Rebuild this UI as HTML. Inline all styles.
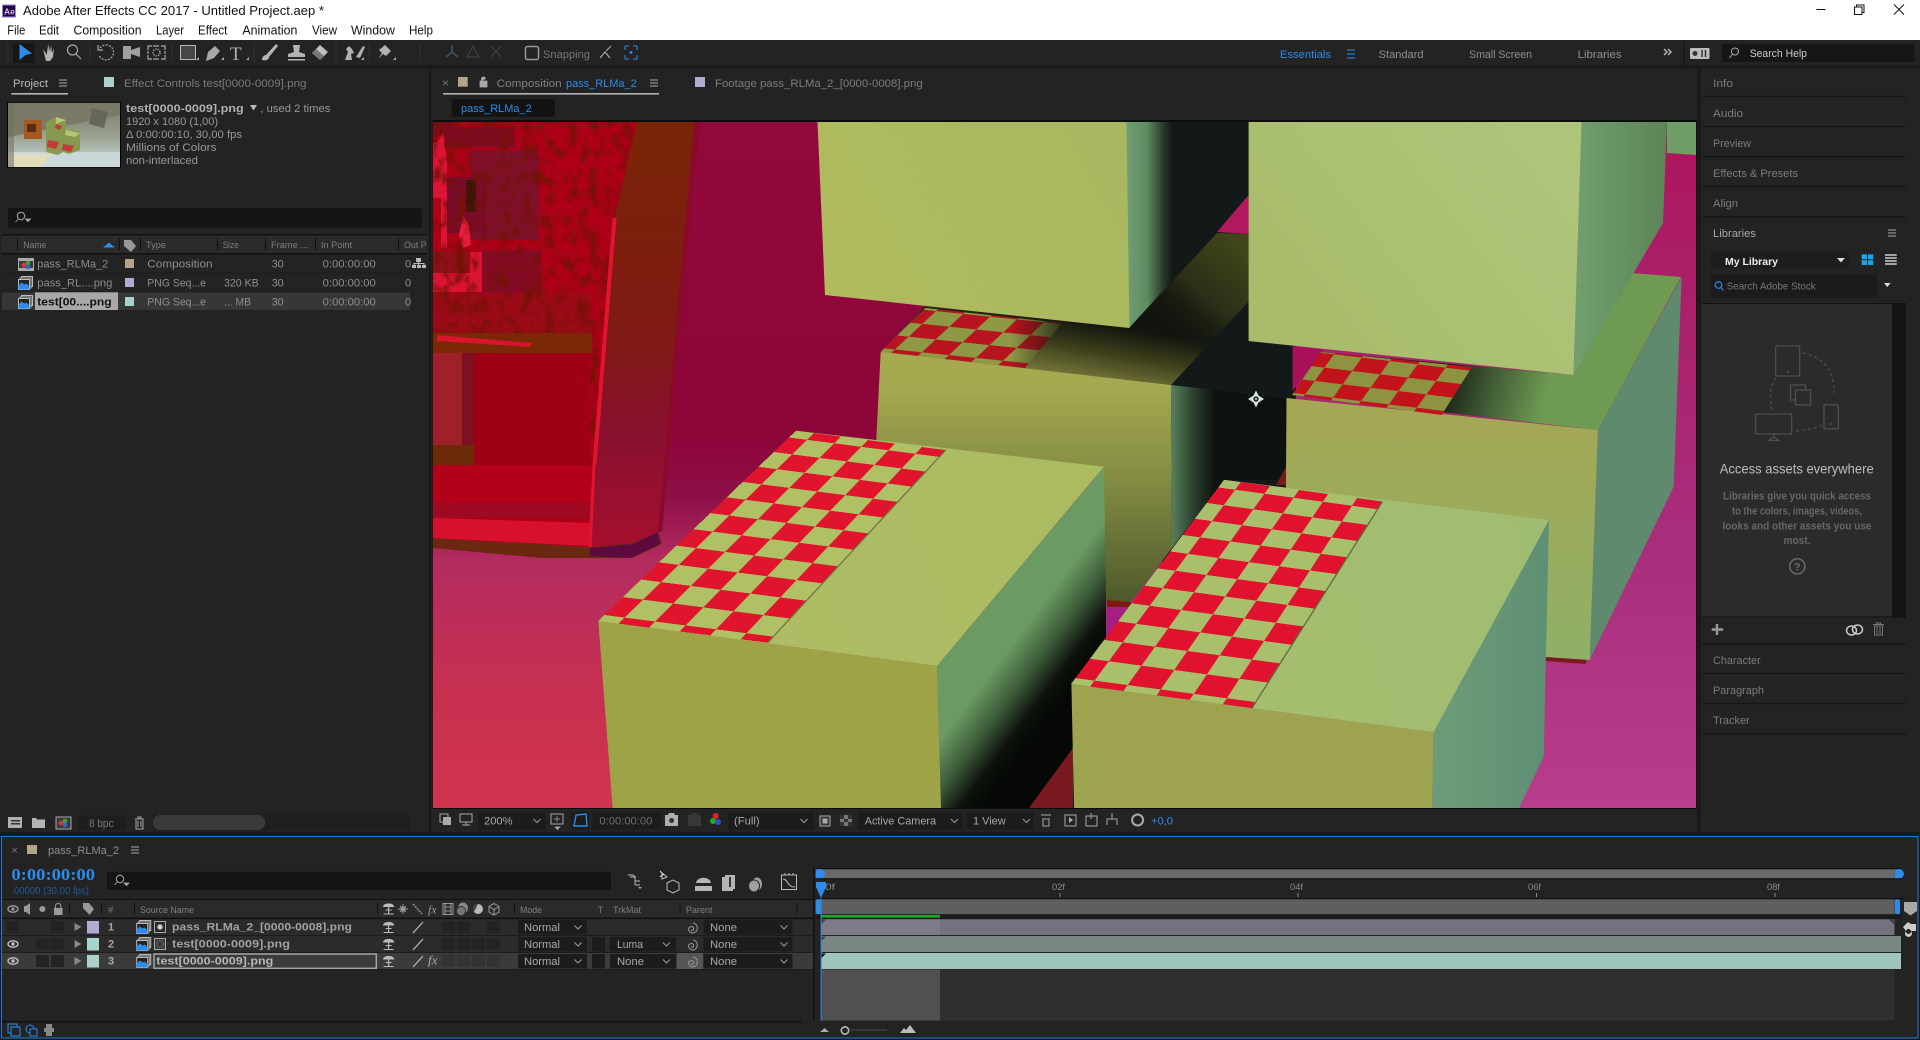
<!DOCTYPE html>
<html><head><meta charset="utf-8"><title>Adobe After Effects CC 2017</title>
<style>
html,body{margin:0;padding:0;background:#1a1a1a;width:1920px;height:1040px;overflow:hidden}
svg{display:block;position:absolute;left:0;top:0}
text{font-family:"Liberation Sans",sans-serif;font-size:11px;white-space:pre}
.m{font-size:12.5px;fill:#111}
.g{fill:#8f8f8f}
.h{fill:#808080;font-size:9.5px}
.b{font-weight:bold}
.bl{fill:#2d8ceb}
.d{fill:#a8a8a8}
.ic{fill:none;stroke:#a8a8a8;stroke-width:1.2}
.ck{position:absolute;transform-origin:0 0;background-size:40px 40px}
</style></head><body>
<svg width="1920" height="1040" viewBox="0 0 1920 1040" xmlns="http://www.w3.org/2000/svg">
<defs>
<linearGradient id="floorL" gradientUnits="userSpaceOnUse" x1="0" y1="122" x2="0" y2="808">
<stop offset="0" stop-color="#920a3c"/><stop offset=".46" stop-color="#8c0438"/><stop offset=".55" stop-color="#8f1048"/><stop offset=".64" stop-color="#b32c60"/><stop offset=".84" stop-color="#c8304f"/><stop offset="1" stop-color="#d03450"/></linearGradient>
<linearGradient id="floorR" gradientUnits="userSpaceOnUse" x1="0" y1="150" x2="0" y2="808">
<stop offset="0" stop-color="#ac175f"/><stop offset=".6" stop-color="#a82e7c"/><stop offset="1" stop-color="#b83d8c"/></linearGradient>
<linearGradient id="band" gradientUnits="userSpaceOnUse" x1="0" y1="122" x2="0" y2="545">
<stop offset="0" stop-color="#7a2606"/><stop offset=".5" stop-color="#7f1a14"/><stop offset=".75" stop-color="#8a1030"/><stop offset="1" stop-color="#a50f2d"/></linearGradient>
<linearGradient id="sideA" gradientUnits="userSpaceOnUse" x1="1127" y1="0" x2="1172" y2="0">
<stop offset="0" stop-color="#6f9f72"/><stop offset=".45" stop-color="#5f8a62"/><stop offset=".8" stop-color="#2c3a2c"/><stop offset="1" stop-color="#141a18"/></linearGradient>
<linearGradient id="sideD" gradientUnits="userSpaceOnUse" x1="1172" y1="0" x2="1215" y2="0">
<stop offset="0" stop-color="#587f5c"/><stop offset=".5" stop-color="#2c3f2e"/><stop offset="1" stop-color="#0d110f"/></linearGradient>
<linearGradient id="topD" gradientUnits="userSpaceOnUse" x1="1125" y1="328" x2="1115" y2="385">
<stop offset="0" stop-color="#11150e"/><stop offset=".45" stop-color="#3a3c1a"/><stop offset="1" stop-color="#76763a"/></linearGradient>
<linearGradient id="oliveD" gradientUnits="userSpaceOnUse" x1="1235" y1="245" x2="1165" y2="325">
<stop offset="0" stop-color="#40451a"/><stop offset=".55" stop-color="#30341a" stop-opacity=".85"/><stop offset="1" stop-color="#14180f" stop-opacity="0"/></linearGradient>
<linearGradient id="frontD" gradientUnits="userSpaceOnUse" x1="0" y1="385" x2="0" y2="600">
<stop offset="0" stop-color="#a5a950"/><stop offset=".45" stop-color="#838a42"/><stop offset="1" stop-color="#4e5a2c"/></linearGradient>
<linearGradient id="frontC" gradientUnits="userSpaceOnUse" x1="0" y1="400" x2="0" y2="660">
<stop offset="0" stop-color="#a5a753"/><stop offset="1" stop-color="#90b068"/></linearGradient>
<linearGradient id="topC" gradientUnits="userSpaceOnUse" x1="1450" y1="375" x2="1545" y2="400">
<stop offset="0" stop-color="#1b2416"/><stop offset=".5" stop-color="#46633a"/><stop offset="1" stop-color="#6f9a52"/></linearGradient>
<linearGradient id="frontB" gradientUnits="userSpaceOnUse" x1="1250" y1="375" x2="1580" y2="122">
<stop offset="0" stop-color="#a8ba68"/><stop offset="1" stop-color="#aec67c"/></linearGradient>
<linearGradient id="frontA" gradientUnits="userSpaceOnUse" x1="820" y1="300" x2="1126" y2="130">
<stop offset="0" stop-color="#b1bb5e"/><stop offset="1" stop-color="#a8b760"/></linearGradient>
<linearGradient id="sideB" gradientUnits="userSpaceOnUse" x1="1575" y1="0" x2="1667" y2="0">
<stop offset="0" stop-color="#719f6f"/><stop offset="1" stop-color="#5c8558"/></linearGradient>
<linearGradient id="sideE" gradientUnits="userSpaceOnUse" x1="970" y1="700" x2="1030" y2="745">
<stop offset="0" stop-color="#6b9a62"/><stop offset=".4" stop-color="#3d5c3a"/><stop offset=".75" stop-color="#0d120c"/><stop offset="1" stop-color="#050805"/></linearGradient>
<linearGradient id="topE" gradientUnits="userSpaceOnUse" x1="640" y1="640" x2="1050" y2="480">
<stop offset="0" stop-color="#b0be66"/><stop offset="1" stop-color="#aabb62"/></linearGradient>
<linearGradient id="topF" gradientUnits="userSpaceOnUse" x1="1100" y1="690" x2="1540" y2="530">
<stop offset="0" stop-color="#a8bd6c"/><stop offset="1" stop-color="#9fbd72"/></linearGradient>
<linearGradient id="sideF" gradientUnits="userSpaceOnUse" x1="1432" y1="0" x2="1549" y2="0">
<stop offset="0" stop-color="#6d9c78"/><stop offset="1" stop-color="#5f8f74"/></linearGradient>
<linearGradient id="fadeD" gradientUnits="userSpaceOnUse" x1="1010" y1="0" x2="1062" y2="0">
<stop offset="0" stop-color="#11150e" stop-opacity="0"/><stop offset="1" stop-color="#11150e" stop-opacity=".75"/></linearGradient>
<linearGradient id="thumb" x1="0" y1="0" x2="0" y2="1"><stop offset="0" stop-color="#7b7b68"/><stop offset=".5" stop-color="#98a090"/><stop offset="1" stop-color="#cfdad6"/></linearGradient>
<pattern id="ckD" patternUnits="userSpaceOnUse" width="2" height="2" patternTransform="matrix(27 2.8 13.7 -12.8 908.6 336.7)"><rect width="2" height="2" fill="#8f9844"/><rect width="1" height="1" fill="#b8141f"/><rect x="1" y="1" width="1" height="1" fill="#b8141f"/></pattern>
<pattern id="ckC" patternUnits="userSpaceOnUse" width="2" height="2" patternTransform="matrix(27.9 3.35 9.6 -13.35 1314.75 381)"><rect width="2" height="2" fill="#8d9340"/><rect width="1" height="1" fill="#c2121a"/><rect x="1" y="1" width="1" height="1" fill="#c2121a"/></pattern>
<clipPath id="vw"><rect x="433" y="122" width="1263" height="686"/></clipPath>
<clipPath id="face"><path d="M433 122h204l-22 95-25 330-157-9z"/></clipPath>
<filter id="nz" x="0" y="0" width="1" height="1" color-interpolation-filters="sRGB"><feTurbulence type="fractalNoise" baseFrequency=".09 .07" numOctaves="4" seed="4"/><feColorMatrix values="0 0 0 0 .45  0 0 0 0 .07  0 0 0 0 .02  2.6 0 0 0 -1.15"/></filter>
<g id="ham"><path d="M0 0h8M0 3h8M0 6h8" stroke="#a8a8a8" stroke-width="1" fill="none"/></g>
<g id="stack"><rect x="3" y="0" width="11" height="10" fill="none" stroke="#bbb"/><rect x="1.5" y="1.5" width="11" height="10" fill="#232323" stroke="#bbb"/><rect x="0" y="3" width="11" height="10" fill="#232323" stroke="#bbb"/><path d="M0 13V9l3-3 3 2 2-1 3 3v3z" fill="#2d8ceb"/></g>
<g id="shy"><path d="M0 3.5C1 0 9 0 10 3.5zM5 3.5V11M2 7h6M0 11h10" stroke="#bbb" fill="#bbb" stroke-width="1.1"/></g>
<g id="chev"><path d="M0 0l3.5 3.5L7 0" fill="none" stroke="#999" stroke-width="1.1"/></g>
</defs>

<!-- window chrome -->
<rect width="1920" height="40" fill="#fff"/>
<rect x="2.5" y="5" width="13" height="12" fill="#23093a" stroke="#9d86d8"/>
<text x="4" y="14.5" style="font-size:8.5px;font-weight:bold;fill:#d8b8ff">Ae</text>
<text x="23" y="15" class="m" textLength="301" lengthAdjust="spacingAndGlyphs">Adobe After Effects CC 2017 - Untitled Project.aep *</text>
<text x="7.3" y="34.5" class="m" textLength="18" lengthAdjust="spacingAndGlyphs">File</text>
<text x="39" y="34.5" class="m" textLength="20" lengthAdjust="spacingAndGlyphs">Edit</text>
<text x="73.5" y="34.5" class="m" textLength="68" lengthAdjust="spacingAndGlyphs">Composition</text>
<text x="156" y="34.5" class="m" textLength="28" lengthAdjust="spacingAndGlyphs">Layer</text>
<text x="198" y="34.5" class="m" textLength="29.4" lengthAdjust="spacingAndGlyphs">Effect</text>
<text x="242.4" y="34.5" class="m" textLength="55" lengthAdjust="spacingAndGlyphs">Animation</text>
<text x="312" y="34.5" class="m" textLength="25" lengthAdjust="spacingAndGlyphs">View</text>
<text x="351" y="34.5" class="m" textLength="44" lengthAdjust="spacingAndGlyphs">Window</text>
<text x="409" y="34.5" class="m" textLength="24" lengthAdjust="spacingAndGlyphs">Help</text>
<path d="M1816.4 9.5h9.2" stroke="#111" fill="none"/>
<path d="M1856.5 7V5h7.5v7.5h-2M1854.5 7h7.5v7.5h-7.5z" stroke="#111" fill="none"/>
<path d="M1894 4.5l10 10M1904 4.5l-10 10" stroke="#111" fill="none"/>

<!-- toolbar -->
<rect y="40" width="1920" height="25" fill="#232323"/>
<g transform="translate(0,-1)">
<rect x="13" y="44" width="22" height="20" fill="#171717"/>
<path d="M19.5 45L32 54.5 25.5 56 19.5 61z" fill="#2d8ceb"/>
<path d="M43 50l4 6v-9l1 6 .5-8 1.5 8 1-7 1 8 2-5-1 9-3 4h-4z" fill="#b5b5b5"/>
<circle cx="72.5" cy="51" r="5" class="ic"/><path d="M76 55l5 5" class="ic"/>
<path d="M100 49a7.5 7.5 0 1 1-1 7" class="ic" stroke-dasharray="2 1.3"/><path d="M98 46v5h5" class="ic"/>
<path d="M123 47h8v13h-8zM131 51l9-3v10l-9-3z" fill="#a0a0a0"/>
<path d="M148 51v-4h4M161 47h4v4M165 56v4h-4M152 60h-4v-4M153 47h6M153 60h6M148 52v3M165 52v3" class="ic"/><circle cx="156.5" cy="53.5" r="3.5" class="ic" stroke-dasharray="1.5 1"/>
<rect x="180.5" y="46.5" width="15" height="14" fill="#474747" stroke="#b8b8b8"/><path d="M196 61h3v-3z" fill="#aaa"/>
<path d="M206 62l2-9 7-6 5 5-6 7z" fill="#a8a8a8"/><path d="M221 61h3v-3z" fill="#aaa"/>
<text x="230" y="61" style="font-family:'Liberation Serif',serif;font-size:19px;fill:#b0b0b0">T</text><path d="M246 61h3v-3z" fill="#aaa"/>
<path d="M262 61c0-3 2-5 4-5l10-11 2 2-9 11c0 3-4 4-7 3z" fill="#b5b5b5"/>
<path d="M293 46h7l-1 7 6 2v3h-17v-3l6-2zM288 60h17v1.5h-17z" fill="#b5b5b5"/>
<path d="M312 54l8-8 8 7-8 8z" fill="#c0c0c0"/><path d="M312 54l4-4 8 7-4 4z" fill="#777"/>
<path d="M345 61l3-8-2-3 3-3 3 3 2 4-3 1 1 6M356 58l7-11 2 1-5 11z" fill="#b0b0b0"/><path d="M361 61h3v-3z" fill="#aaa"/>
<path d="M378 60l4-6-3-3 6-5 6 6-5 5-3-2z" fill="#b0b0b0"/><path d="M393 61h3v-3z" fill="#aaa"/>
<path d="M452 46v7l-6 5M452 53l6 5" stroke="#3d4a58" stroke-width="2" fill="none"/><path d="M473 47l-6 11h12zM491 47l10 11M501 47l-10 11" stroke="#444" fill="none"/>
<rect x="525.5" y="47.5" width="13" height="13" rx="2" fill="none" stroke="#9a9a9a" stroke-width="1.5"/>
<path d="M600 59l5-6 5 6M606 52l5-5" class="ic" stroke="#999"/>
<path d="M625 51v-4h4M633 47h4v4M637 56v4h-4M629 60h-4v-4" fill="none" stroke="#2d8ceb"/><circle cx="631" cy="53.5" r="1.5" fill="#2d8ceb"/>
<path d="M8 45v18M90 45v18M172 45v18M254 45v18M336 45v18M369 45v18M420 45v18" stroke="#333"/>
</g>
<text x="543" y="58" class="g" style="fill:#777" textLength="47" lengthAdjust="spacingAndGlyphs">Snapping</text>
<text x="1280" y="58" class="bl" textLength="51" lengthAdjust="spacingAndGlyphs">Essentials</text>
<path d="M1347 50h8M1347 54h8M1347 58h8" stroke="#2d8ceb" fill="none"/>
<text x="1378.6" y="58" class="g" textLength="45" lengthAdjust="spacingAndGlyphs">Standard</text>
<text x="1469" y="58" class="g" textLength="63" lengthAdjust="spacingAndGlyphs">Small Screen</text>
<text x="1577.6" y="58" class="g" textLength="44" lengthAdjust="spacingAndGlyphs">Libraries</text>
<path d="M1664 49l3 3-3 3M1668 49l3 3-3 3" stroke="#bbb" stroke-width="1.4" fill="none"/>
<path d="M1684 41v24" stroke="#111"/>
<rect x="1690" y="48" width="19.5" height="11" rx="1" fill="#bcbcbc"/><circle cx="1695" cy="53.5" r="2.5" fill="#333"/><path d="M1702 50v7M1705.5 50v7" stroke="#333" stroke-width="1.5"/>
<rect x="1722" y="44" width="192.7" height="18" rx="2" fill="#161616"/>
<circle cx="1735" cy="51.5" r="3.5" fill="none" stroke="#aaa"/><path d="M1732.5 54l-3 4" stroke="#aaa"/>
<text x="1749.7" y="57" style="fill:#ccc" textLength="57.3" lengthAdjust="spacingAndGlyphs">Search Help</text>

<!-- panels -->
<rect y="69" width="429" height="763" fill="#232323"/>
<rect x="431" y="69" width="1266" height="763" fill="#232323"/>
<rect x="1701" y="69" width="219" height="763" fill="#232323"/>

<!-- project panel -->
<text x="13" y="87" style="fill:#bbb" textLength="35" lengthAdjust="spacingAndGlyphs">Project</text>
<use href="#ham" x="59" y="80"/>
<rect x="11.4" y="93" width="56.6" height="1.6" fill="#b5b5b5"/>
<rect x="104" y="77" width="10" height="10" fill="#a8d2cc"/>
<text x="124" y="87" style="fill:#7a7a7a" textLength="182.5" lengthAdjust="spacingAndGlyphs">Effect Controls test[0000-0009].png</text>
<rect x="7.5" y="103" width="113" height="64" fill="url(#thumb)" stroke="#000"/>
<path d="M8 103h112v12l-40 8-72 14z" fill="#7a7a66"/>
<path d="M92 108l16 4-4 16-15-4z" fill="#66665a"/>
<path d="M8 152h112v15H8z" fill="#c9d8d8"/><path d="M8 154h44l-12 13H8z" fill="#e2dcba"/>
<path d="M8 103h6v64H8z" fill="#6f6f5c" opacity=".55"/>
<rect x="24" y="120" width="18" height="19" fill="#a45a22"/><rect x="27" y="124" width="9" height="8" fill="#5a2c10"/>
<path d="M46 122l10-5 10 3v10l7-1 7 3v18l-11 4-6-2-5 3-12-3z" fill="#86994e"/><path d="M56 117l10 3-10 4zM66 130l14 3-5 4-10-2z" fill="#b7c476"/><path d="M48 140l11 2-3 7-9-2zM63 144l11 2-3 6-9-2zM56 124l6 2-2 4-5-2z" fill="#c43a38"/>
<text x="126" y="112" class="b" style="fill:#b0b0b0" textLength="117.7" lengthAdjust="spacingAndGlyphs">test[0000-0009].png</text>
<path d="M250 105h7l-3.5 5.5z" fill="#bbb"/>
<text x="260.4" y="112" style="fill:#999" textLength="70" lengthAdjust="spacingAndGlyphs">, used 2 times</text>
<text x="126" y="125" style="fill:#999" textLength="92" lengthAdjust="spacingAndGlyphs">1920 x 1080 (1,00)</text>
<text x="126" y="138" style="fill:#999" textLength="116" lengthAdjust="spacingAndGlyphs">Δ 0:00:00:10, 30,00 fps</text>
<text x="126" y="151" style="fill:#999" textLength="90.6" lengthAdjust="spacingAndGlyphs">Millions of Colors</text>
<text x="126" y="164" style="fill:#999" textLength="72" lengthAdjust="spacingAndGlyphs">non-interlaced</text>
<rect x="8" y="208" width="413.7" height="19.7" rx="2" fill="#151515"/>
<circle cx="21" cy="216" r="3.7" fill="none" stroke="#aaa"/><path d="M18.5 219l-3 3M25.5 219h5l-2.5 2.5z" stroke="#aaa" fill="#aaa" stroke-width=".8"/>
<rect x="2" y="234" width="425" height="1.5" fill="#111"/>
<rect x="2" y="235.5" width="425" height="17.5" fill="#2a2a2a"/>
<rect x="2" y="253" width="425" height="1.5" fill="#111"/>
<path d="M17.5 238v12M119.5 238v12M140.5 238v12M217.5 238v12M265.5 238v12M315.5 238v12M398.5 238v12" stroke="#111"/>
<text x="23.3" y="248" class="h" textLength="23" lengthAdjust="spacingAndGlyphs">Name</text>
<path d="M103 247.5l6-5 6 5z" fill="#2d8ceb"/>
<path d="M124 240h7l5 6-5 6-7-6z" fill="#999"/>
<text x="146" y="248" class="h" textLength="20" lengthAdjust="spacingAndGlyphs">Type</text>
<text x="222.7" y="248" class="h" textLength="16" lengthAdjust="spacingAndGlyphs">Size</text>
<text x="271" y="248" class="h" textLength="37" lengthAdjust="spacingAndGlyphs">Frame ...</text>
<text x="321" y="248" class="h" textLength="31" lengthAdjust="spacingAndGlyphs">In Point</text>
<text x="404" y="248" class="h" textLength="22.7" lengthAdjust="spacingAndGlyphs">Out P</text>
<path d="M2 273h408M2 292h408" stroke="#1c1c1c"/>
<rect x="2" y="292.3" width="408" height="17.7" fill="#373737"/>
<rect x="35" y="292.3" width="83" height="17.7" fill="#a8a8a8"/>
<rect x="18.5" y="258.5" width="15" height="12" fill="#3a3a3a" stroke="#aaa"/><path d="M19 259h14v2H19zM19 268h14v2H19z" fill="#aaa"/><circle cx="24" cy="265" r="2.5" fill="#d33"/><circle cx="28" cy="263" r="2.3" fill="#3a3"/><circle cx="28" cy="267" r="2.3" fill="#36c"/>
<use href="#stack" x="18.5" y="276.5"/><use href="#stack" x="18.5" y="295.5"/>
<text x="37.3" y="267.5" class="g" textLength="71" lengthAdjust="spacingAndGlyphs">pass_RLMa_2</text>
<text x="37.3" y="286.5" class="g" textLength="75" lengthAdjust="spacingAndGlyphs">pass_RL....png</text>
<text x="37.3" y="305.5" class="b" style="fill:#111" textLength="74.3" lengthAdjust="spacingAndGlyphs">test[00....png</text>
<rect x="125" y="259" width="9" height="9" fill="#b5a48a"/><rect x="125" y="278" width="9" height="9" fill="#b0aad4"/><rect x="125" y="297" width="9" height="9" fill="#a8d2cc"/>
<text x="147.3" y="267.5" class="g" textLength="65.3" lengthAdjust="spacingAndGlyphs">Composition</text>
<text x="147.3" y="286.5" class="g" textLength="58.7" lengthAdjust="spacingAndGlyphs">PNG Seq...e</text>
<text x="147.3" y="305.5" class="g" textLength="58.7" lengthAdjust="spacingAndGlyphs">PNG Seq...e</text>
<text x="224" y="286.5" class="g" textLength="34.7" lengthAdjust="spacingAndGlyphs">320 KB</text>
<text x="224" y="305.5" class="g" textLength="27" lengthAdjust="spacingAndGlyphs">... MB</text>
<text x="271.7" y="267.5" class="g" textLength="12" lengthAdjust="spacingAndGlyphs">30</text><text x="271.7" y="286.5" class="g" textLength="12" lengthAdjust="spacingAndGlyphs">30</text><text x="271.7" y="305.5" class="g" textLength="12" lengthAdjust="spacingAndGlyphs">30</text>
<text x="322.7" y="267.5" class="g" textLength="53" lengthAdjust="spacingAndGlyphs">0:00:00:00</text><text x="322.7" y="286.5" class="g" textLength="53" lengthAdjust="spacingAndGlyphs">0:00:00:00</text><text x="322.7" y="305.5" class="g" textLength="53" lengthAdjust="spacingAndGlyphs">0:00:00:00</text>
<text x="405" y="267.5" class="g">0</text><text x="405" y="286.5" class="g">0</text><text x="405" y="305.5" class="g">0</text>
<path d="M416 258h5v4h-5zM412 265h4v3h-4zM417 265h4v3h-4zM422 265h4v3h-4z" fill="#bbb"/><path d="M418.5 262v1.5h-4.5v2M418.5 263.5h5.5v2M418.5 263.5v2" stroke="#bbb" fill="none"/>
<rect x="2" y="812" width="425" height="20" fill="#232323"/>
<rect x="8" y="817" width="14" height="11" fill="#b0b0b0"/><rect x="11" y="820" width="9" height="1.5" fill="#333"/><rect x="11" y="823" width="9" height="1.5" fill="#333"/>
<path d="M32 818h4l1 1.5h8v8.5H32z" fill="#b5b5b5"/>
<rect x="56" y="817" width="15" height="12" fill="#3a3a3a" stroke="#aaa"/><circle cx="61" cy="823" r="2.4" fill="#d33"/><circle cx="65" cy="821" r="2.3" fill="#3a3"/><circle cx="65" cy="825" r="2.3" fill="#36c"/>
<rect x="77.5" y="815.5" width="49" height="15" rx="2" fill="#1e1e1e"/>
<text x="89" y="827" style="fill:#777" textLength="24.5" lengthAdjust="spacingAndGlyphs">8 bpc</text>
<path d="M135 819h9M138 819v-2h3v2M136 820v9h7v-9M138 821v6M141 821v6" stroke="#a8a8a8" fill="none"/>
<rect x="153" y="814.5" width="257" height="16" fill="#1f1f1f"/>
<rect x="153" y="815" width="112" height="15" rx="7" fill="#3a3a3a"/>

<!-- comp panel -->
<text x="442" y="87" style="fill:#777;font-size:12px">×</text>
<rect x="458" y="77" width="9.7" height="9.7" fill="#b5a48a"/>
<path d="M480 81h7v6h-7zM481.5 81v-2a2 2 0 0 1 4 0" fill="#a8a8a8" stroke="#a8a8a8" stroke-width=".8"/>
<text x="496.7" y="87" style="fill:#808080" textLength="65" lengthAdjust="spacingAndGlyphs">Composition</text>
<text x="566" y="87" class="bl" textLength="70.7" lengthAdjust="spacingAndGlyphs">pass_RLMa_2</text>
<use href="#ham" x="650" y="80"/>
<rect x="443" y="93" width="216" height="1.6" fill="#b5b5b5"/>
<rect x="695" y="77" width="10" height="10" fill="#b0aad4"/>
<text x="715" y="87" style="fill:#7d7d7d" textLength="207.7" lengthAdjust="spacingAndGlyphs">Footage pass_RLMa_2_[0000-0008].png</text>
<rect x="451.7" y="99.3" width="103.3" height="17.4" fill="#131313"/>
<text x="461" y="112" class="bl" textLength="70.7" lengthAdjust="spacingAndGlyphs">pass_RLMa_2</text>
<rect x="432.7" y="120" width="1264" height="689" fill="#0c0c0c"/>

<!-- viewer scene -->
<g clip-path="url(#vw)">
<rect x="433" y="122" width="680" height="686" fill="url(#floorL)"/>
<rect x="1100" y="122" width="600" height="686" fill="url(#floorR)"/>
<path d="M700 808L1000 380 1100 440V808z" fill="#b02a52" opacity=".35"/>
<!-- red object -->
<path d="M433 538l157 9 43-4 25-11 4 12-30 14-90 0-109-10z" fill="#6b2810"/>
<path d="M590 548l43-4 25-12 2 12-30 14-40-2z" fill="#5d0a3e"/>
<path d="M433 122h204l-22 95-25 330-157-9z" fill="#ad0018"/>
<path d="M637 122h57l-36 410-25 11-43 4 6-82 19-248z" fill="url(#band)"/>
<path d="M700 122l-6 0-36 410 4 0z" fill="#8a0a2c"/>
<path d="M433 122h20v14h-20zM445 127h70v20h-70z" fill="#7e0a20"/>
<rect x="470" y="150" width="69" height="90" fill="#80102a"/>
<rect x="445" y="177" width="41" height="56" fill="#7a0b2b"/>
<path d="M466 180h10v32h-10z" fill="#3f1606"/>
<path d="M433 143h4l6-10 4 30v85h-6v-50h-8z" fill="#dd1335"/>
<path d="M459 235l4-20 6 10 2 20-8 3z" fill="#ea1c3c"/>
<rect x="433" y="252" width="49" height="40" fill="#dc1232"/>
<rect x="433" y="252" width="37" height="21" fill="#8e1018"/>
<rect x="482" y="250" width="59" height="43" fill="#850a25"/>
<path d="M433 293h159l-1 40H433z" fill="#9a0a18"/>
<g clip-path="url(#face)"><rect x="433" y="122" width="210" height="395" filter="url(#nz)"/></g>
<path d="M433 333h159v20H433z" fill="#7a2806"/>
<path d="M437 335l94 8v4l-94-6z" fill="#d8142f"/>
<rect x="433" y="353" width="41" height="100" fill="#7c1122"/>
<rect x="433" y="353" width="29" height="92" fill="#a0202a"/>
<rect x="433" y="445" width="41" height="20" fill="#6b2a08"/>
<rect x="474" y="353" width="116" height="112" fill="#a00016"/>
<rect x="433" y="465" width="158" height="37" fill="#b4001a"/>
<rect x="433" y="502" width="158" height="16" fill="#9f0a22"/>
<path d="M433 518l157 5v23l-157-8z" fill="#d81030"/>
<path d="M612.5 218h4l-20 247h-4zM592.5 465h3l-4 82h-3z" fill="#e3142f"/>
<!-- dark gap -->
<rect x="1126" y="122" width="170" height="440" fill="#131918"/>
<path d="M1217 232l31.6-37v39z" fill="#b3175e"/>
<path d="M1292.6 346l31 4-31 41z" fill="#a8115a"/>
<!-- D -->
<path d="M925 306L1129 328 1217 233l33 1v66l-79 85-290-33z" fill="url(#topD)"/>
<path d="M1217 233l33 1v66l-79 85-42-57z" fill="url(#oliveD)"/>
<path d="M880.7 351.7L1171 385l1 163-41 54-31-2-4-130-220-25z" fill="url(#frontD)"/>
<path d="M1107 600l24 2 1 6-25-1z" fill="#7a1a10"/>
<path d="M1107 607h24l-25 32z" fill="#a32080"/>
<path d="M1171 385l115 13 2 82h-64l-52 68z" fill="url(#sideD)"/>
<path d="M1276 485l11-20v20z" fill="#7a1a18"/>
<polygon points="925.6,308 1061.6,323 1025,368 880.7,351.7" fill="url(#ckD)"/>
<polygon points="925.6,308 1061.6,323 1025,368 1000,365" fill="url(#fadeD)"/>
<!-- C -->
<path d="M1286.5 398l311.5 32-8 230-45-3-260-20z" fill="url(#frontC)"/>
<path d="M1292 395l29-43 252 23 59-102 49 4-83 153z" fill="url(#topC)"/>
<path d="M1598 430l83.6-153-8 210-84 173z" fill="#5f8a6d"/>
<path d="M1545.7 657l41 3-1 4-40-3z" fill="#7a1a1c"/>
<polygon points="1321,352 1472,367 1441.6,415 1292,395" fill="url(#ckC)"/>
<!-- A -->
<path d="M1126 122h48v157l-45 49z" fill="url(#sideA)"/>
<polygon points="817.5,122 1126.5,122 1129.4,328 825,295" fill="url(#frontA)"/>
<!-- B -->
<path d="M1581.6 122h85.4l-4 101-89.5 152z" fill="url(#sideB)"/>
<path d="M1667 122h29v33l-29-2z" fill="#6e9d65"/>
<polygon points="1248.6,122 1581.6,122 1573.5,375 1248.6,341" fill="url(#frontB)"/>
<!-- E -->
<path d="M937 666l167-199 2 133v208H941z" fill="url(#sideE)"/>
<path d="M1029 808l44-60v60z" fill="#7a1a20"/>
<polygon points="598.3,621 796.3,430.7 1104,466.7 937,666" fill="url(#topE)"/>
<polygon points="598.3,621 937,666 941,808 612.6,808" fill="#9ea348"/>
<!-- F -->
<polygon points="1433.5,732.3 1549,520 1543.7,756.7 1519,808 1432,808" fill="url(#sideF)"/>
<polygon points="1071.4,684.3 1433.5,732.3 1432,808 1074,808" fill="#9da34e"/>
<polygon points="1071.4,684.3 1224.5,480 1549,520 1433.5,732.3" fill="url(#topF)"/>
</g>

<!-- viewer footer -->
<rect x="440" y="814" width="8" height="8" fill="none" stroke="#aaa"/><rect x="443" y="817" width="8" height="8" fill="#aaa"/>
<rect x="460" y="814" width="12" height="8" fill="none" stroke="#aaa"/><path d="M466 822v3M462 825h8" stroke="#aaa"/>
<rect x="478" y="811.7" width="68" height="18" rx="2" fill="#1c1c1c"/>
<text x="484" y="824.5" class="d" textLength="28.6" lengthAdjust="spacingAndGlyphs">200%</text><use href="#chev" x="533.5" y="819"/>
<rect x="551" y="814" width="12" height="10" fill="none" stroke="#aaa"/><path d="M557 816v6M554 819h6M555 827h5l-2.5 2.5z" stroke="#aaa" fill="#aaa" stroke-width=".7"/>
<rect x="571" y="811.7" width="18" height="18" fill="#1c1c1c"/><path d="M574 826l2-11 10-1 1 12z" fill="none" stroke="#2d8ceb" stroke-width="1.4"/>
<rect x="592.4" y="811.7" width="68.2" height="18" rx="2" fill="#1c1c1c"/>
<text x="599.4" y="824.5" style="fill:#6f6f6f" textLength="53" lengthAdjust="spacingAndGlyphs">0:00:00:00</text>
<path d="M665 815h3l1-2h5l1 2h3v11h-13z" fill="#b0b0b0"/><circle cx="671.6" cy="820.5" r="2.5" fill="#333"/>
<path d="M688 815h3l1-2h5l1 2h3v11h-13z" fill="#383838"/>
<circle cx="715.7" cy="816" r="3" fill="#d22"/><circle cx="713" cy="821" r="3" fill="#2a2"/><circle cx="718" cy="822" r="3" fill="#25c"/>
<rect x="728" y="811.7" width="85.7" height="18" rx="2" fill="#1c1c1c"/>
<text x="734" y="824.5" class="d" textLength="25.7" lengthAdjust="spacingAndGlyphs">(Full)</text><use href="#chev" x="800.5" y="819"/>
<rect x="820" y="816" width="10" height="10" fill="#333" stroke="#aaa"/><rect x="822.5" y="818.5" width="5" height="5" fill="#aaa"/>
<rect x="840" y="815" width="12" height="11" fill="#777"/><path d="M840 815h4v4h-4zM848 815h4v4h-4zM844 819h4v3h-4zM840 822h4v4h-4zM848 822h4v4h-4z" fill="#333"/>
<rect x="858.6" y="811.7" width="104" height="18" rx="2" fill="#1c1c1c"/>
<text x="864.7" y="824.5" class="d" textLength="71.4" lengthAdjust="spacingAndGlyphs">Active Camera</text><use href="#chev" x="951" y="819"/>
<rect x="966.7" y="811.7" width="67.3" height="18" rx="2" fill="#1c1c1c"/>
<text x="973" y="824.5" class="d" textLength="32.7" lengthAdjust="spacingAndGlyphs">1 View</text><use href="#chev" x="1023" y="819"/>
<path d="M1041 815h10M1043 819h6v7h-6z" stroke="#aaa" fill="none"/>
<rect x="1065" y="815" width="11" height="11" fill="none" stroke="#aaa"/><path d="M1069 817l4 3-4 3z" fill="#aaa"/>
<path d="M1086 816h11v10h-11zM1091 813v6" stroke="#aaa" fill="none"/>
<path d="M1107 825v-6h10v6M1112 813v6" stroke="#aaa" fill="none"/>
<circle cx="1137.6" cy="820" r="5.5" fill="none" stroke="#aaa" stroke-width="2"/>
<text x="1151" y="824.5" class="bl" textLength="22" lengthAdjust="spacingAndGlyphs">+0,0</text>

<!-- right panels -->
<text x="1713" y="87" style="fill:#7c7c7c" textLength="20" lengthAdjust="spacingAndGlyphs">Info</text>
<text x="1713" y="117" style="fill:#7c7c7c" textLength="30" lengthAdjust="spacingAndGlyphs">Audio</text>
<text x="1713" y="147" style="fill:#7c7c7c" textLength="38" lengthAdjust="spacingAndGlyphs">Preview</text>
<text x="1713" y="177" style="fill:#7c7c7c" textLength="85" lengthAdjust="spacingAndGlyphs">Effects &amp; Presets</text>
<text x="1713" y="207" style="fill:#7c7c7c" textLength="25" lengthAdjust="spacingAndGlyphs">Align</text>
<text x="1713" y="237" style="fill:#a8a8a8" textLength="43" lengthAdjust="spacingAndGlyphs">Libraries</text>
<text x="1713" y="664" style="fill:#7c7c7c" textLength="47.7" lengthAdjust="spacingAndGlyphs">Character</text>
<text x="1713" y="694" style="fill:#7c7c7c" textLength="51" lengthAdjust="spacingAndGlyphs">Paragraph</text>
<text x="1713" y="724" style="fill:#7c7c7c" textLength="36.7" lengthAdjust="spacingAndGlyphs">Tracker</text>
<path d="M1702 96.5h204M1702 126.5h204M1702 156.5h204M1702 186.5h204M1702 217h204M1702 644h204M1702 673.5h204M1702 703.5h204M1702 734h204" stroke="#151515" stroke-width="1.2"/>
<use href="#ham" x="1888" y="230"/>
<rect x="1710.7" y="251.7" width="138.3" height="16.8" fill="#1d1d1d"/>
<text x="1725" y="265" class="b" style="fill:#f0f0f0;font-size:10px" textLength="53" lengthAdjust="spacingAndGlyphs">My Library</text>
<path d="M1837 258h8l-4 4.5z" fill="#ddd"/>
<path d="M1861.7 254.4h5.3v4.8h-5.3zM1868 254.4h5.3v4.8H1868zM1861.7 260.2h5.3v4.8h-5.3zM1868 260.2h5.3v4.8H1868z" fill="#19a6f0"/>
<path d="M1885 255h11.7M1885 258h11.7M1885 261h11.7M1885 264h11.7" stroke="#d0d0d0" stroke-width="1.5"/>
<rect x="1710.7" y="274.7" width="186.3" height="23" fill="#1b1b1b"/>
<rect x="1876.7" y="274.7" width="20.3" height="23" fill="#232323"/>
<circle cx="1718.5" cy="285" r="3.3" fill="none" stroke="#2d7ed8" stroke-width="1.3"/><path d="M1721 287.5l2.5 3" stroke="#2d7ed8" stroke-width="1.3"/>
<text x="1726.7" y="289.5" style="fill:#777;font-size:10.5px" textLength="89" lengthAdjust="spacingAndGlyphs">Search Adobe Stock</text>
<path d="M1884 283h6.5l-3.2 4z" fill="#ddd"/>
<rect x="1702" y="304" width="190" height="312.8" fill="#2b2b2b"/>
<rect x="1892" y="304" width="14" height="312.8" fill="#141414"/>
<path d="M1702 303.5h204M1702 617h204" stroke="#111"/>
<g fill="none" stroke="#4e4e4e" stroke-width="1.3">
<rect x="1775.7" y="346" width="24" height="30" rx="1"/>
<rect x="1755.7" y="414" width="36" height="20" rx="1"/>
<path d="M1773.7 434v3l-5 3.5h10l-5-3.5"/>
<rect x="1824" y="404.8" width="14.3" height="24" rx="1"/>
<rect x="1790.5" y="385" width="15" height="15"/><rect x="1795.5" y="390" width="15" height="15" fill="#2b2b2b"/>
<path d="M1803 353c18 4 31 14 31 40M1776 378c-7 8-6 22-4 34M1796 431c9-1 18-2 26-6" stroke-dasharray="3 3"/>
</g>
<circle cx="1787.7" cy="372" r="1.2" fill="#4e4e4e"/><circle cx="1831" cy="424" r="1" fill="#4e4e4e"/>
<text x="1719.7" y="473.5" style="fill:#bdbdbd;font-size:14px" textLength="154" lengthAdjust="spacingAndGlyphs">Access assets everywhere</text>
<text x="1723" y="499.5" class="b" style="fill:#676767" textLength="148" lengthAdjust="spacingAndGlyphs">Libraries give you quick access</text>
<text x="1732" y="514.5" class="b" style="fill:#676767" textLength="130" lengthAdjust="spacingAndGlyphs">to the colors, images, videos,</text>
<text x="1722.5" y="529.5" class="b" style="fill:#676767" textLength="149" lengthAdjust="spacingAndGlyphs">looks and other assets you use</text>
<text x="1783.5" y="544" class="b" style="fill:#676767" textLength="27" lengthAdjust="spacingAndGlyphs">most.</text>
<circle cx="1797.3" cy="566.3" r="7.6" fill="none" stroke="#6a6a6a" stroke-width="1.5"/>
<text x="1797.3" y="570.5" text-anchor="middle" class="b" style="fill:#6a6a6a">?</text>
<path d="M1717 624v11M1711.7 629.5h11.5" stroke="#999" stroke-width="2.4"/>
<ellipse cx="1851.5" cy="630.5" rx="5" ry="4.5" fill="none" stroke="#ccc" stroke-width="1.5"/><ellipse cx="1857.5" cy="629.5" rx="5" ry="4.5" fill="none" stroke="#ccc" stroke-width="1.5"/>
<path d="M1873 624.5h11M1876.5 624.5v-1.5h4v1.5M1874.5 626h8v9h-8z" stroke="#777" fill="none"/><path d="M1877 627v7M1880 627v7" stroke="#777"/>

<!-- timeline panel -->
<rect x="1.5" y="836.5" width="1916.5" height="201.5" fill="#232323" stroke="#2379d0"/>
<text x="11.5" y="854" style="fill:#777;font-size:11px">×</text>
<rect x="27" y="845" width="10" height="9" fill="#b5a48a"/>
<text x="48" y="854" class="g" textLength="71" lengthAdjust="spacingAndGlyphs">pass_RLMa_2</text>
<use href="#ham" x="131" y="847"/>
<text x="11.4" y="880" class="b" style="font-family:'Liberation Serif',serif;font-size:17px;fill:#2d8ceb" textLength="83.6" lengthAdjust="spacingAndGlyphs">0:00:00:00</text>
<text x="13.9" y="894" style="font-size:10px;fill:#1e5a9e" textLength="75" lengthAdjust="spacingAndGlyphs">00000 (30.00 fps)</text>
<rect x="107" y="871.7" width="504" height="18.3" rx="2" fill="#151515"/>
<circle cx="120" cy="879" r="3.7" fill="none" stroke="#aaa"/><path d="M117.5 882l-3 3M124 883h5l-2.5 2.5z" stroke="#aaa" fill="#aaa" stroke-width=".8"/>
<g transform="translate(0,-1)">
<path d="M628 876h5l2 2v8M630 878h6M635 882h5M635 886h5" stroke="#bbb" fill="none"/><path d="M638 888h4l-2 2z" fill="#aaa"/>
<path d="M662 874l5 4-5 2zM667 884l6-3 6 3v7l-6 3-6-3z" fill="none" stroke="#bbb"/><path d="M660 872l4 4M663 875l-3 3" stroke="#ddd"/>
<path d="M696 884c1-7 14-7 15 0zM703 884v3M695 887h17v5h-17z" fill="#b5b5b5"/>
<rect x="722" y="878" width="11" height="14" fill="#b5b5b5"/><rect x="725" y="876" width="10" height="14" fill="#b5b5b5"/><rect x="729" y="878" width="2" height="10" fill="#333"/>
<ellipse cx="757" cy="885" rx="5.5" ry="7" fill="#a0a0a0" stroke="#222"/><ellipse cx="754" cy="887" rx="5.5" ry="6" fill="#a0a0a0" stroke="#222"/>
<rect x="781.5" y="876" width="15" height="14.5" fill="none" stroke="#bbb"/><path d="M783 880c5 0 4 8 12 8M785 876v-2M789 876v-2M793 876v-2" stroke="#bbb" fill="none"/>
</g>
<!-- left header -->
<rect x="2" y="899" width="812" height="1" fill="#111"/><rect x="2" y="900" width="812" height="18" fill="#2a2a2a"/><rect x="2" y="917.5" width="812" height="1.5" fill="#111"/>
<path d="M69.5 903v11M101.5 903v11M134.5 903v11M377.5 903v11M514.5 903v11M680 903v11M797 903v11" stroke="#111"/>
<ellipse cx="13" cy="909" rx="5" ry="3.2" fill="none" stroke="#999" stroke-width="1.4"/><circle cx="13" cy="909" r="1.6" fill="#999"/>
<path d="M24 906h2l4-3v12l-4-3h-2z" fill="#999"/><circle cx="42.4" cy="909" r="3" fill="#999"/>
<rect x="54" y="908" width="8.5" height="7" fill="#999"/><path d="M55.5 908v-2a2.7 2.7 0 0 1 5.4 0v2" fill="none" stroke="#999"/>
<path d="M83 903h6l5 6-4.5 6-6.5-7z" fill="#999"/>
<text x="108" y="913" class="h">#</text>
<text x="140" y="913" class="h" textLength="54" lengthAdjust="spacingAndGlyphs">Source Name</text>
<use href="#shy" x="383.6" y="903"/>
<path d="M403 904v10M398 909h10M400 906l6 6M406 906l-6 6" stroke="#999"/><circle cx="403" cy="909" r="2.6" fill="#999"/>
<path d="M413 904l9 10" stroke="#999" stroke-width="1.5" stroke-dasharray="2 1"/>
<text x="428" y="913.5" style="font-family:'Liberation Serif',serif;font-style:italic;font-size:12px;fill:#999">fx</text>
<rect x="443" y="903.5" width="10" height="11" fill="none" stroke="#999"/><path d="M445 904v10M451 904v10M445 907h6M445 911h6" stroke="#999"/>
<ellipse cx="463" cy="908" rx="5" ry="5.5" fill="#888"/><ellipse cx="461" cy="911" rx="4.5" ry="4.5" fill="#777" stroke="#333"/>
<circle cx="478" cy="909" r="5" fill="#bbb"/><path d="M478 904a5 5 0 0 0-4 8z" fill="#444"/>
<path d="M494 903.5l5 3v5.5l-5 3-5-3v-5.5zM489 906.5l5 3 5-3M494 909.5v5.5" fill="none" stroke="#999"/>
<text x="520" y="913" class="h" textLength="22" lengthAdjust="spacingAndGlyphs">Mode</text>
<text x="598" y="913" class="h" textLength="5" lengthAdjust="spacingAndGlyphs">T</text>
<text x="613" y="913" class="h" textLength="28" lengthAdjust="spacingAndGlyphs">TrkMat</text>
<text x="686" y="913" class="h" textLength="26.5" lengthAdjust="spacingAndGlyphs">Parent</text>
<!-- rows -->
<rect x="2" y="919.3" width="812" height="16" fill="#2b2b2b"/>
<rect x="2" y="936" width="812" height="16" fill="#2b2b2b"/>
<rect x="2" y="953" width="812" height="16" fill="#3b3b3b"/>
<path d="M2 935.5h812M2 952.5h812M2 969.5h812" stroke="#1c1c1c"/>
<g fill="#232323">
<rect x="6" y="921" width="13" height="12"/><rect x="51" y="921" width="13" height="12"/>
<rect x="36" y="938" width="13" height="12"/><rect x="51" y="938" width="13" height="12"/>
<rect x="36" y="955" width="13" height="12"/><rect x="51" y="955" width="13" height="12"/>
<rect x="442" y="921" width="13" height="12"/><rect x="457" y="921" width="13" height="12"/><rect x="487" y="921" width="13" height="12"/>
<rect x="442" y="938" width="13" height="12"/><rect x="457" y="938" width="13" height="12"/><rect x="472" y="938" width="13" height="12"/><rect x="487" y="938" width="13" height="12"/>
</g>
<g fill="#333"><rect x="442" y="955" width="13" height="12"/><rect x="457" y="955" width="13" height="12"/><rect x="472" y="955" width="13" height="12"/><rect x="487" y="955" width="13" height="12"/></g>
<ellipse cx="13" cy="944" rx="5" ry="3.2" fill="none" stroke="#bbb" stroke-width="1.4"/><circle cx="13" cy="944" r="1.7" fill="#bbb"/>
<ellipse cx="13" cy="961" rx="5" ry="3.2" fill="none" stroke="#bbb" stroke-width="1.4"/><circle cx="13" cy="961" r="1.7" fill="#bbb"/>
<path d="M74.5 923l7 4-7 4zM74.5 940l7 4-7 4zM74.5 957l7 4-7 4z" fill="#888"/>
<rect x="87" y="921" width="12" height="12.5" fill="#b0aad4"/><rect x="87" y="938" width="12" height="12.5" fill="#a8d2cc"/><rect x="87" y="955" width="12" height="12.5" fill="#a8d2cc"/>
<text x="108" y="930.5" class="b d">1</text><text x="108" y="947.5" class="b d">2</text><text x="108" y="964.5" class="b d">3</text>
<use href="#stack" x="136.7" y="920.5"/><use href="#stack" x="136.7" y="937.5"/><use href="#stack" x="136.7" y="954.5"/>
<rect x="154.5" y="921.5" width="11" height="11" fill="#2a2a2a" stroke="#aaa"/><circle cx="160" cy="927" r="2.7" fill="#ccc"/>
<rect x="154.5" y="938.5" width="11" height="11" fill="#3a3a3a" stroke="#aaa"/><circle cx="160" cy="944" r="3.4" fill="none" stroke="#777" stroke-dasharray="1.5 1"/>
<text x="172" y="930.5" class="b" style="fill:#a0a0a0" textLength="180" lengthAdjust="spacingAndGlyphs">pass_RLMa_2_[0000-0008].png</text>
<text x="172" y="947.5" class="b" style="fill:#a0a0a0" textLength="118" lengthAdjust="spacingAndGlyphs">test[0000-0009].png</text>
<rect x="154" y="954" width="222.3" height="14.3" fill="#3b3b3b" stroke="#a5a5a5" stroke-width="1.5"/>
<text x="156.3" y="964.5" class="b" style="fill:#b5b5b5" textLength="117" lengthAdjust="spacingAndGlyphs">test[0000-0009].png</text>
<use href="#shy" x="383.6" y="921.5"/><use href="#shy" x="383.6" y="938.5"/><use href="#shy" x="383.6" y="955.5"/>
<path d="M413 933l10-11M413 950l10-11M413 967l10-11" stroke="#bbb" stroke-width="1.2"/>
<text x="428" y="964.5" style="font-family:'Liberation Serif',serif;font-style:italic;font-size:13px;fill:#aaa">fx</text>
<g fill="#1c1c1c"><rect x="518" y="920" width="69" height="14.5"/><rect x="518" y="937" width="69" height="14.5"/><rect x="518" y="954" width="69" height="14.5"/>
<rect x="592" y="937" width="13" height="14.5"/><rect x="592" y="954" width="13" height="14.5"/>
<rect x="610" y="937" width="66" height="14.5"/><rect x="610" y="954" width="66" height="14.5"/>
<rect x="703.5" y="920" width="89" height="14.5"/><rect x="703.5" y="937" width="89" height="14.5"/><rect x="703.5" y="954" width="89" height="14.5"/></g>
<rect x="677" y="953" width="26" height="16" fill="#555"/>
<text x="524" y="931" class="d" textLength="36" lengthAdjust="spacingAndGlyphs">Normal</text><text x="524" y="948" class="d" textLength="36" lengthAdjust="spacingAndGlyphs">Normal</text><text x="524" y="965" class="d" textLength="36" lengthAdjust="spacingAndGlyphs">Normal</text>
<use href="#chev" x="574.5" y="925.5"/><use href="#chev" x="574.5" y="942.5"/><use href="#chev" x="574.5" y="959.5"/>
<text x="617" y="948" class="d" textLength="26" lengthAdjust="spacingAndGlyphs">Luma</text><text x="617" y="965" class="d" textLength="27" lengthAdjust="spacingAndGlyphs">None</text>
<use href="#chev" x="663" y="942.5"/><use href="#chev" x="663" y="959.5"/>
<g fill="none" stroke="#9a9a9a" stroke-width="1"><path d="M693 923a4.5 5 0 1 1-4.5 6.5c0-3 4-4 5-1.5s-2 3-2.5 1.5"/><path d="M693 940a4.5 5 0 1 1-4.5 6.5c0-3 4-4 5-1.5s-2 3-2.5 1.5"/><path d="M693 957a4.5 5 0 1 1-4.5 6.5c0-3 4-4 5-1.5s-2 3-2.5 1.5"/></g>
<text x="710" y="931" class="d" textLength="27" lengthAdjust="spacingAndGlyphs">None</text><text x="710" y="948" class="d" textLength="27" lengthAdjust="spacingAndGlyphs">None</text><text x="710" y="965" class="d" textLength="27" lengthAdjust="spacingAndGlyphs">None</text>
<use href="#chev" x="780.5" y="925.5"/><use href="#chev" x="780.5" y="942.5"/><use href="#chev" x="780.5" y="959.5"/>
<!-- right timeline -->
<rect x="813" y="868" width="1.5" height="153" fill="#111"/>
<rect x="815.7" y="868" width="1086" height="1.5" fill="#111"/>
<rect x="815.7" y="869.3" width="1079" height="9" fill="#6a6a6a"/>
<path d="M815.7 878.3v-9h3a4.5 4.5 0 0 1 3 9zM1894.8 869.3h2.5a4.5 4.5 0 0 1 3.5 9h-6z" fill="#2d8ceb"/>
<rect x="815.7" y="878.3" width="1086" height="1" fill="#111"/>
<rect x="815.7" y="898" width="1088" height="1.3" fill="#111"/>
<rect x="815.7" y="899.3" width="1079" height="15" fill="#5f5f5f"/>
<rect x="815.7" y="899.3" width="4.8" height="15" rx="2" fill="#2d8ceb"/><rect x="1895" y="899.3" width="5" height="15" rx="2" fill="#2d8ceb"/>
<rect x="815.7" y="914.3" width="1086" height="4.7" fill="#1a1a1a"/>
<rect x="821" y="915" width="119" height="2.7" fill="#1fa52a"/>
<text x="825" y="890" class="h" style="fill:#8a8a8a" textLength="10" lengthAdjust="spacingAndGlyphs">0f</text>
<text x="1052" y="890" class="h" style="fill:#8a8a8a" textLength="13" lengthAdjust="spacingAndGlyphs">02f</text>
<text x="1290" y="890" class="h" style="fill:#8a8a8a" textLength="13" lengthAdjust="spacingAndGlyphs">04f</text>
<text x="1528" y="890" class="h" style="fill:#8a8a8a" textLength="13" lengthAdjust="spacingAndGlyphs">06f</text>
<text x="1767" y="890" class="h" style="fill:#8a8a8a" textLength="13" lengthAdjust="spacingAndGlyphs">08f</text>
<path d="M1060 893v4M1298 893v4M1536.5 893v4M1775 893v4" stroke="#888"/>
<rect x="821" y="919.3" width="1073.5" height="15.7" fill="#74727f"/>
<rect x="821" y="919.3" width="119" height="15.7" fill="#7d7b88"/>
<rect x="821" y="936" width="1080" height="16" fill="#7a8884"/>
<rect x="821" y="953" width="1080" height="16" fill="#a0c5bd"/>
<rect x="821" y="969.5" width="1073.5" height="51" fill="#2f2f2f"/>
<rect x="821" y="969.5" width="119" height="51" fill="#505050"/>
<path d="M821 919.5h5l-5 5zM821 936.5h5l-5 5z" fill="#444"/><path d="M821 953.5h5l-5 5z" fill="#111"/>
<path d="M1894 919.5h-5l5 5z" fill="#444"/>
<path d="M816 882h10v5l-5 11-5-11z" fill="#2d8ceb"/>
<rect x="820.6" y="898" width="1" height="122.5" fill="#2d8ceb"/>
<path d="M1904 902h13v9l-6.5 4.5-6.5-4.5z" fill="#a8a8a8"/>
<path d="M1903 927l5-5 3 2h5v7h-5a3.5 3.5 0 1 1-5 0z" fill="#ccc"/><circle cx="1908.5" cy="931.5" r="2.5" fill="#232323"/>
<rect x="2" y="1021" width="800" height="1.3" fill="#111"/>
<rect x="8" y="1024" width="9" height="9" fill="none" stroke="#2d8ceb"/><rect x="11" y="1027" width="9" height="9" fill="#232323" stroke="#2d8ceb"/>
<circle cx="30" cy="1029" r="4" fill="none" stroke="#2d8ceb"/><rect x="30" y="1029" width="7" height="7" fill="#232323" stroke="#2d8ceb"/>
<path d="M46 1024h6v12h-6zM44 1028h2v4h-2zM52 1028h2v4h-2z" fill="#888"/>
<path d="M820 1032l4.5-4 4.5 4z" fill="#aaa"/>
<circle cx="845" cy="1030.5" r="3.7" fill="none" stroke="#bbb" stroke-width="1.6"/><path d="M849 1030h38" stroke="#3c3c3c" stroke-width="1.6"/>
<path d="M900 1033l4-5 2 2 4-5 6 8z" fill="#bbb"/>
</svg>

<!-- perspective checkerboards -->
<div class="ck" style="left:598.3px;top:621px;width:110.8px;height:236.1px;background-image:conic-gradient(#e0142c 25%,#b0c064 0 50%,#e0142c 0 75%,#b0c064 0);background-position:-6.65px -13.4px;transform:matrix3d(1.53014,.19603,0,.00000767,.95002,-.91309,0,.00056269,0,0,1,0,0,0,0,1)"></div>
<div class="ck" style="left:1071.4px;top:684.3px;width:108.7px;height:236.1px;background-image:conic-gradient(#e0122d 25%,#a9bf6c 0 50%,#e0122d 0 75%,#a9bf6c 0);background-position:-8.5px -14px;transform:matrix3d(1.6655,.22157,0,.00003246,.73897,-.98611,0,.00059119,0,0,1,0,0,0,0,1)"></div>

<svg width="1920" height="1040" viewBox="0 0 1920 1040" xmlns="http://www.w3.org/2000/svg" style="pointer-events:none">
<path d="M945.7 450L767.7 642.7" stroke="#6a6f44" stroke-width="1.2"/>
<path d="M1382.4 501.7L1251.8 708.3" stroke="#5f6a3c" stroke-width="1.3"/>
<path d="M1256 390.5l2.5 5 5.5 3.5-5.5 3.5-2.5 5-2.5-5-5.5-3.5 5.5-3.5z" fill="#d5e2e2"/><circle cx="1256" cy="399" r="2.6" fill="#1b2422"/><circle cx="1256" cy="399" r="1" fill="#d5e2e2"/>
</svg>
</body></html>
